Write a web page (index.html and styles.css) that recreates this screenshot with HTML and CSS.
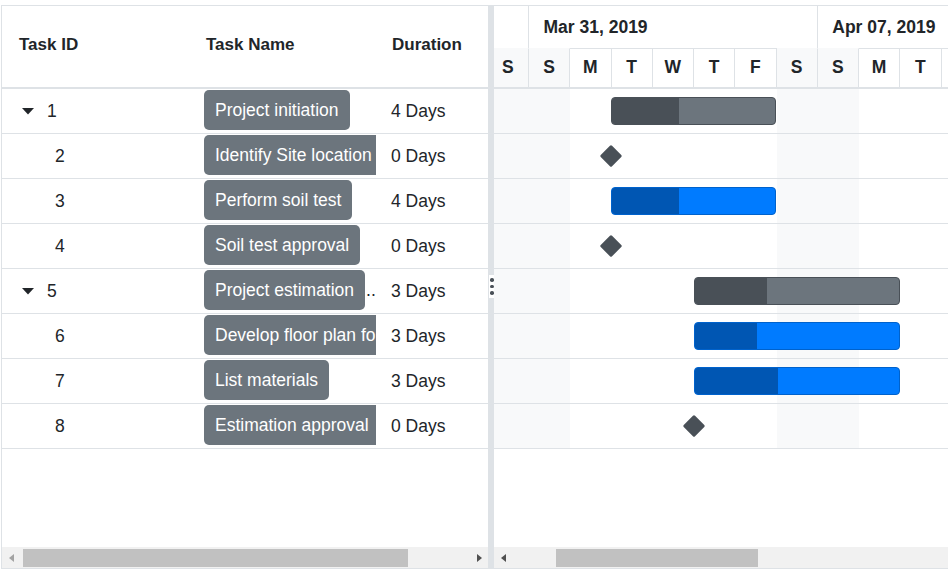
FILE: index.html
```html
<!DOCTYPE html>
<html lang="en">
<head>
<meta charset="utf-8">
<title>Gantt</title>
<link rel="stylesheet" href="styles.css">
</head>
<body>
<div class="gantt">
  <div class="grid-pane">
    <div class="grid-header">
      <div class="hcell h-id">Task ID</div>
      <div class="hcell h-name">Task Name</div>
      <div class="hcell h-dur">Duration</div>
    </div>
    <div class="grid-rows">
      <div class="grow">
        <div class="cell c-id parent"><svg class="caret" width="12" height="7" viewBox="0 0 12 7"><polygon points="0,0 12,0 6,6.5" fill="#212529"/></svg><span>1</span></div>
        <div class="cell c-name"><span class="btn">Project initiation</span></div>
        <div class="cell c-dur">4 Days</div>
      </div>
      <div class="grow">
        <div class="cell c-id child">2</div>
        <div class="cell c-name"><span class="btn">Identify Site location</span></div>
        <div class="cell c-dur">0 Days</div>
      </div>
      <div class="grow">
        <div class="cell c-id child">3</div>
        <div class="cell c-name"><span class="btn">Perform soil test</span></div>
        <div class="cell c-dur">4 Days</div>
      </div>
      <div class="grow">
        <div class="cell c-id child">4</div>
        <div class="cell c-name"><span class="btn">Soil test approval</span></div>
        <div class="cell c-dur">0 Days</div>
      </div>
      <div class="grow">
        <div class="cell c-id parent"><svg class="caret" width="12" height="7" viewBox="0 0 12 7"><polygon points="0,0 12,0 6,6.5" fill="#212529"/></svg><span>5</span></div>
        <div class="cell c-name"><span class="btn">Project estimation</span><span class="ell">...</span></div>
        <div class="cell c-dur">3 Days</div>
      </div>
      <div class="grow">
        <div class="cell c-id child">6</div>
        <div class="cell c-name"><span class="btn">Develop floor plan for estimation</span></div>
        <div class="cell c-dur">3 Days</div>
      </div>
      <div class="grow">
        <div class="cell c-id child">7</div>
        <div class="cell c-name"><span class="btn">List materials</span></div>
        <div class="cell c-dur">3 Days</div>
      </div>
      <div class="grow">
        <div class="cell c-id child">8</div>
        <div class="cell c-name"><span class="btn">Estimation approval</span></div>
        <div class="cell c-dur">0 Days</div>
      </div>
    </div>
    <div class="scrollbar">
      <div class="sb-btn"><span class="arr-left disabled"></span></div>
      <div class="thumb grid-thumb"></div>
      <div class="sb-fill"></div>
      <div class="sb-btn"><span class="arr-right"></span></div>
    </div>
  </div>

  <div class="splitter">
    <div class="handle"><i></i><i></i><i></i></div>
  </div>

  <div class="chart-pane">
    <div class="chart-header">
      <div class="tier1">
        <div class="wk wk-tail"></div>
        <div class="wk">Mar 31, 2019</div>
        <div class="wk">Apr 07, 2019</div>
      </div>
      <div class="tier2">
        <div class="day we">S</div>
        <div class="day we">S</div>
        <div class="day">M</div>
        <div class="day">T</div>
        <div class="day">W</div>
        <div class="day">T</div>
        <div class="day">F</div>
        <div class="day we">S</div>
        <div class="day we">S</div>
        <div class="day">M</div>
        <div class="day">T</div>
        <div class="day">W</div>
      </div>
    </div>
    <div class="chart-body">
      <div class="shade">
        <div class="col we"></div><div class="col we"></div><div class="col"></div><div class="col"></div><div class="col"></div><div class="col"></div><div class="col"></div><div class="col we"></div><div class="col we"></div><div class="col"></div><div class="col"></div><div class="col"></div>
      </div>
      <div class="chart-rows">
        <div class="crow"><div class="bar parent-bar" style="margin-left:123px;width:165px"><div class="prog" style="width:67px"></div></div></div>
        <div class="crow"><div class="diamond" style="margin-left:115.25px"></div></div>
        <div class="crow"><div class="bar child-bar" style="margin-left:123px;width:165px"><div class="prog" style="width:67px"></div></div></div>
        <div class="crow"><div class="diamond" style="margin-left:115.25px"></div></div>
        <div class="crow"><div class="bar parent-bar" style="margin-left:206px;width:206px"><div class="prog" style="width:72px"></div></div></div>
        <div class="crow"><div class="bar child-bar" style="margin-left:206px;width:206px"><div class="prog" style="width:62px"></div></div></div>
        <div class="crow"><div class="bar child-bar" style="margin-left:206px;width:206px"><div class="prog" style="width:83px"></div></div></div>
        <div class="crow"><div class="diamond" style="margin-left:198px"></div></div>
      </div>
    </div>
    <div class="scrollbar chart-sb">
      <div class="sb-btn"><span class="arr-left"></span></div>
      <div class="thumb chart-thumb"></div>
      <div class="sb-fill"></div>
    </div>
  </div>
</div>
</body>
</html>
```

FILE: styles.css
```css
html, body {
  margin: 0;
  overflow: hidden;
  background: #ffffff;
}
body {
  padding: 5px 0 0 1px;
  font-family: "Liberation Sans", Arial, sans-serif;
  color: #212529;
}
.gantt {
  display: flex;
  width: 946px;
  height: 562px;
  border: 1px solid #dee2e6;
  border-right: none;
}

/* ---------- grid ---------- */
.grid-pane {
  width: 486px;
  flex-shrink: 0;
  border-right: 1px solid #dee2e6;
  display: flex;
  flex-direction: column;
}
.grid-header {
  display: grid;
  grid-template-columns: 190px 194px 102px;
  height: 81px;
  border-bottom: 2px solid #dee2e6;
}
.hcell {
  display: flex;
  align-items: center;
  font-weight: bold;
  font-size: 17px;
  padding-bottom: 3px;
}
.h-id { padding-left: 17px; }
.h-name { padding-left: 14px; }
.h-dur { padding-left: 6px; }

.grid-rows {
  display: flex;
  flex-direction: column;
}
.grow {
  display: grid;
  grid-template-columns: 190px 194px 102px;
  height: 44px;
  border-bottom: 1px solid #dee2e6;
}
.cell {
  font-size: 17.5px;
  display: flex;
  align-items: center;
  white-space: nowrap;
  overflow: hidden;
}
.c-id.parent { padding-left: 20px; }
.c-id.child { padding-left: 53px; }
.caret {
  margin-right: 13px;
  flex-shrink: 0;
}
.c-name {
  padding: 1px 0 0 12px;
  margin-right: 10px;
  align-items: flex-start;
}
.btn {
  flex-shrink: 0;
  display: block;
  height: 40px;
  line-height: 40px;
  padding: 0 11px;
  background: #6c757d;
  color: #ffffff;
  border-radius: 5px;
  font-size: 17.5px;
}
.ell {
  margin-left: 1px;
  line-height: 40px;
  flex-shrink: 0;
  color: #212529;
}
.c-dur { padding-left: 5px; }

/* ---------- scrollbars ---------- */
.scrollbar {
  margin-top: auto;
  height: 21px;
  background: #f1f1f1;
  display: flex;
  align-items: stretch;
}
.sb-btn {
  width: 18px;
  display: flex;
  align-items: center;
  justify-content: center;
  flex-shrink: 0;
}
.sb-fill { flex: 1; }
.thumb {
  background: #c1c1c1;
  margin-top: 2px;
  margin-bottom: 1px;
  flex-shrink: 0;
}
.grid-thumb { margin-left: 3px; width: 385px; }
.chart-thumb { margin-left: 44px; width: 202px; }
.arr-left {
  width: 0; height: 0;
  border-top: 4.5px solid transparent;
  border-bottom: 4.5px solid transparent;
  border-right: 5px solid #505050;
}
.arr-left.disabled { border-right-color: #a3a3a3; }
.arr-right {
  width: 0; height: 0;
  border-top: 4.5px solid transparent;
  border-bottom: 4.5px solid transparent;
  border-left: 5px solid #505050;
}

/* ---------- splitter ---------- */
.splitter {
  width: 5px;
  flex-shrink: 0;
  background: #dee2e6;
  display: flex;
  align-items: center;
}
.handle {
  width: 5px;
  height: 23px;
  background: #ffffff;
  display: flex;
  flex-direction: column;
  align-items: center;
  justify-content: center;
  gap: 3px;
  margin-top: -1px;
}
.handle i {
  display: block;
  width: 3.5px;
  height: 3.5px;
  border-radius: 50%;
  background: #495057;
  margin-left: 1px;
}

/* ---------- chart ---------- */
.chart-pane {
  flex: 1;
  min-width: 0;
  overflow: hidden;
  display: flex;
  flex-direction: column;
}
.chart-header {
  margin-left: -6.25px;
  width: 495px;
  height: 81px;
  border-bottom: 2px solid #dee2e6;
  display: flex;
  flex-direction: column;
}
.tier1 {
  height: 42px;
  display: flex;
  flex-shrink: 0;
}
.wk {
  width: 288.75px;
  flex-shrink: 0;
  box-sizing: border-box;
  border-right: 1px solid #dee2e6;
  font-weight: bold;
  font-size: 17.5px;
  padding-left: 14.5px;
  display: flex;
  align-items: center;
}
.wk.wk-tail { width: 41.25px; padding: 0; }
.tier2 {
  flex: 1;
  display: flex;
}
.day {
  width: 41.25px;
  flex-shrink: 0;
  box-sizing: border-box;
  border-right: 1px solid #dee2e6;
  border-top: 1px solid #dee2e6;
  display: flex;
  align-items: center;
  justify-content: center;
  font-weight: bold;
  font-size: 17.5px;
  padding-bottom: 1px;
}
.day.we {
  background: #f8f9fa;
  border-top-color: #f8f9fa;
}

.chart-body {
  margin-left: -6.25px;
  width: 495px;
  display: grid;
}
.shade, .chart-rows { grid-area: 1 / 1; }
.shade { display: flex; }
.col { width: 41.25px; flex-shrink: 0; }
.col.we { background: #f8f9fa; }
.chart-rows {
  display: flex;
  flex-direction: column;
}
.crow {
  height: 44px;
  border-bottom: 1px solid #dee2e6;
  display: flex;
  align-items: center;
}
.bar {
  box-sizing: border-box;
  height: 28px;
  border-radius: 4px;
  overflow: hidden;
  flex-shrink: 0;
  display: flex;
}
.bar .prog { height: 100%; }
.parent-bar {
  background: #6c757d;
  border: 1px solid #495057;
}
.parent-bar .prog { background: #495057; }
.child-bar {
  background: #007bff;
  border: 1px solid #0062cc;
}
.child-bar .prog { background: #0056b3; }
.diamond {
  width: 16px;
  height: 16px;
  background: #495057;
  transform: rotate(45deg);
  border-radius: 1.5px;
  flex-shrink: 0;
}
```
